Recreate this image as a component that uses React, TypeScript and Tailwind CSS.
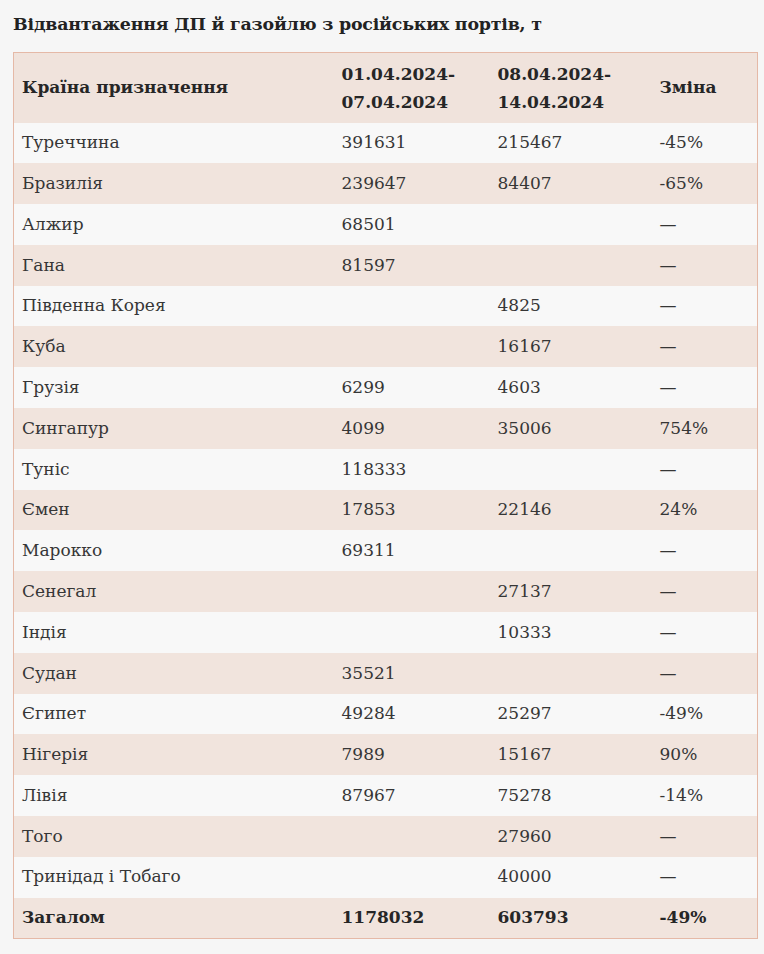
const rows: [string, string, string, string][] = [
  ['Туреччина', '391631', '215467', '-45%'],
  ['Бразилія', '239647', '84407', '-65%'],
  ['Алжир', '68501', '', '—'],
  ['Гана', '81597', '', '—'],
  ['Південна Корея', '', '4825', '—'],
  ['Куба', '', '16167', '—'],
  ['Грузія', '6299', '4603', '—'],
  ['Сингапур', '4099', '35006', '754%'],
  ['Туніс', '118333', '', '—'],
  ['Ємен', '17853', '22146', '24%'],
  ['Марокко', '69311', '', '—'],
  ['Сенегал', '', '27137', '—'],
  ['Індія', '', '10333', '—'],
  ['Судан', '35521', '', '—'],
  ['Єгипет', '49284', '25297', '-49%'],
  ['Нігерія', '7989', '15167', '90%'],
  ['Лівія', '87967', '75278', '-14%'],
  ['Того', '', '27960', '—'],
  ['Тринідад і Тобаго', '', '40000', '—'],
];

export default function App() {
  return (
    <div className="min-h-[954px] w-[764px] bg-[#f6f6f6] px-[13px] pt-[12px] font-['DejaVu_Serif',serif] text-[#363636]">
      <h2 className="text-[17.4px] font-bold leading-[25px] tracking-[-0.2px] text-[#222]">
        Відвантаження ДП й газойлю з російських портів, т
      </h2>
      <table className="mt-[15px] w-[744px] table-fixed border-collapse border border-[#e5b9a7] text-[17px]">
        <colgroup>
          <col className="w-[320px]" />
          <col className="w-[156px]" />
          <col className="w-[162px]" />
          <col className="w-[106px]" />
        </colgroup>
        <thead>
          <tr className="h-[70px] bg-[#f0e3dc] text-left font-bold text-[#262626]">
            <th className="px-2 font-bold">Країна призначення</th>
            <th className="px-2 font-bold leading-[28px]">01.04.2024-<br />07.04.2024</th>
            <th className="px-2 font-bold leading-[28px]">08.04.2024-<br />14.04.2024</th>
            <th className="px-2 font-bold">Зміна</th>
          </tr>
        </thead>
        <tbody>
          {rows.map((r, i) => (
            <tr key={r[0]} className={`h-[40.8px] ${i % 2 === 0 ? 'bg-[#f8f8f8]' : 'bg-[#f1e4dd]'}`}>
              {r.map((c, j) => (
                <td key={j} className="px-2">{c}</td>
              ))}
            </tr>
          ))}
          <tr className="h-[40.8px] bg-[#f1e4dd] font-bold text-[#262626]">
            <td className="px-2">Загалом</td>
            <td className="px-2">1178032</td>
            <td className="px-2">603793</td>
            <td className="px-2">-49%</td>
          </tr>
        </tbody>
      </table>
    </div>
  );
}
